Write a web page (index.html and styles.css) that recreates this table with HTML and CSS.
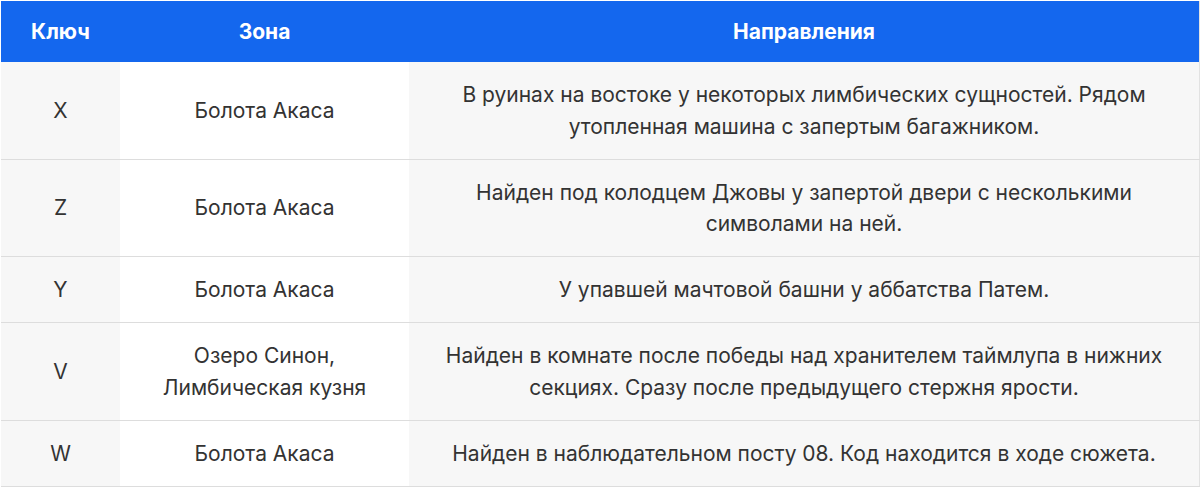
FILE: index.html
```html
<!DOCTYPE html>
<html lang="ru">
<head>
<meta charset="utf-8">
<link rel="stylesheet" href="styles.css">
</head>
<body>
<table class="keys">
  <colgroup>
    <col class="w-key">
    <col class="w-zone">
    <col class="w-dir">
  </colgroup>
  <thead>
    <tr>
      <th>Ключ</th>
      <th>Зона</th>
      <th>Направления</th>
    </tr>
  </thead>
  <tbody>
    <tr>
      <td class="c-key">X</td>
      <td class="c-zone">Болота Акаса</td>
      <td class="c-dir">В руинах на востоке у некоторых лимбических сущностей. Рядом утопленная машина с запертым багажником.</td>
    </tr>
    <tr>
      <td class="c-key">Z</td>
      <td class="c-zone">Болота Акаса</td>
      <td class="c-dir">Найден под колодцем Джовы у запертой двери с несколькими символами на ней.</td>
    </tr>
    <tr>
      <td class="c-key">Y</td>
      <td class="c-zone">Болота Акаса</td>
      <td class="c-dir">У упавшей мачтовой башни у аббатства Патем.</td>
    </tr>
    <tr>
      <td class="c-key">V</td>
      <td class="c-zone">Озеро Синон, Лимбическая кузня</td>
      <td class="c-dir">Найден в комнате после победы над хранителем таймлупа в нижних секциях. Сразу после предыдущего стержня ярости.</td>
    </tr>
    <tr>
      <td class="c-key">W</td>
      <td class="c-zone">Болота Акаса</td>
      <td class="c-dir">Найден в наблюдательном посту 08. Код находится в ходе сюжета.</td>
    </tr>
  </tbody>
</table>
</body>
</html>
```
FILE: styles.css
```css
html, body {
  margin: 0;
  padding: 0;
  background: #ffffff;
}
body {
  padding: 1px 0 0 1px;
  font-family: Inter, "Noto Sans", sans-serif;
  color: #333333;
}
.keys {
  width: 1199px;
  border-collapse: collapse;
  table-layout: fixed;
  border-right: 1px solid #e2e2e2;
}
.w-key { width: 119px; }
.w-zone { width: 289px; }
.keys th {
  background: #1467ee;
  color: #ffffff;
  font-weight: 700;
  font-size: 21px;
  line-height: 31px;
  padding: 15px 8px;
  text-align: center;
}
.keys td {
  font-size: 21px;
  line-height: 31.5px;
  padding: 17px 24px 16.5px;
  text-align: center;
  border-bottom: 1px solid #dddddd;
}
.keys td.c-key { background: #f7f7f7; padding-left: 6px; padding-right: 6px; }
.keys td.c-zone { background: #ffffff; }
.keys td.c-dir { background: #f7f7f7; }
```
